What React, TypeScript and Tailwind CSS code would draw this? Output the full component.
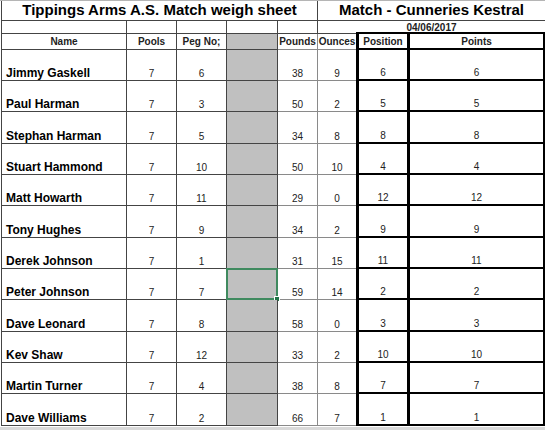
import React from 'react'

type Row = {
  name: string
  pools: number
  peg: number
  pounds: number
  ounces: number
  position: number
  points: number
}

const ROWS: Row[] = [
  { name: 'Jimmy Gaskell', pools: 7, peg: 6, pounds: 38, ounces: 9, position: 6, points: 6 },
  { name: 'Paul Harman', pools: 7, peg: 3, pounds: 50, ounces: 2, position: 5, points: 5 },
  { name: 'Stephan Harman', pools: 7, peg: 5, pounds: 34, ounces: 8, position: 8, points: 8 },
  { name: 'Stuart Hammond', pools: 7, peg: 10, pounds: 50, ounces: 10, position: 4, points: 4 },
  { name: 'Matt Howarth', pools: 7, peg: 11, pounds: 29, ounces: 0, position: 12, points: 12 },
  { name: 'Tony Hughes', pools: 7, peg: 9, pounds: 34, ounces: 2, position: 9, points: 9 },
  { name: 'Derek Johnson', pools: 7, peg: 1, pounds: 31, ounces: 15, position: 11, points: 11 },
  { name: 'Peter Johnson', pools: 7, peg: 7, pounds: 59, ounces: 14, position: 2, points: 2 },
  { name: 'Dave Leonard', pools: 7, peg: 8, pounds: 58, ounces: 0, position: 3, points: 3 },
  { name: 'Kev Shaw', pools: 7, peg: 12, pounds: 33, ounces: 2, position: 10, points: 10 },
  { name: 'Martin Turner', pools: 7, peg: 4, pounds: 38, ounces: 8, position: 7, points: 7 },
  { name: 'Dave Williams', pools: 7, peg: 2, pounds: 66, ounces: 7, position: 1, points: 1 },
]

const SELECTED = 'Peter Johnson'

// numbers sit at the bottom of the cell, centred, like Excel
const num = 'flex items-end justify-center pb-[1px] text-[10px] leading-[10px] text-[#222]'

function DataRow({ row, index }: { row: Row; index: number }) {
  const h = index % 3 === 2 ? 'h-[32px]' : 'h-[31px]'
  const selected = row.name === SELECTED

  return (
    <div className={`flex ${h}`}>
      <div className="w-[125px] flex items-end pl-[4px] pb-[1px] text-[12px] leading-[12px] font-bold text-black border-r border-b border-[#444]">
        {row.name}
      </div>
      <div className={`w-[50px] ${num} border-r border-b border-[#444]`}>{row.pools}</div>
      <div className={`w-[50px] ${num} border-r border-b border-[#444]`}>{row.peg}</div>
      <div className="w-[51px] bg-[#c0c0c0] border-r border-b border-[#444] relative">
        {selected && (
          <>
            <div className="absolute -left-px -top-px -right-px -bottom-px border-2 border-[#3f8a5f]" />
            <div className="absolute -right-[3px] -bottom-[3px] w-[6px] h-[6px] bg-[#217346] border border-white" />
          </>
        )}
      </div>
      <div className={`w-[40px] ${num} border-r border-b border-[#8a8a8a]`}>{row.pounds}</div>
      <div className={`w-[38px] ${num} border-b border-[#8a8a8a]`}>{row.ounces}</div>
      <div className={`w-[54px] ${num} border-l-[3px] border-r-[3px] border-b-2 border-black`}>{row.position}</div>
      <div className={`w-[135px] ${num} border-r-2 border-b-2 border-black`}>{row.points}</div>
    </div>
  )
}

export default function App() {
  return (
    <div
      className="w-[545px] h-[431px] bg-white overflow-hidden border-t border-[#b5b5b5]"
      style={{ fontFamily: '"Liberation Sans", Arial, sans-serif' }}
    >
      <div className="ml-px border-l border-[#444] w-[544px]">
        {/* Title row */}
        <div className="flex h-[20px]">
          <div className="w-[316px] flex items-center justify-center text-[15px] font-bold text-black border-r border-b border-[#444]">
            Tippings Arms A.S. Match weigh sheet
          </div>
          <div className="w-[227px] flex items-center justify-center text-[15px] font-bold text-black border-b border-[#444]">
            Match - Cunneries Kestral
          </div>
        </div>

        {/* Date row */}
        <div className="flex h-[13px]">
          <div className="w-[125px] border-r border-b border-[#444]" />
          <div className="w-[50px] border-r border-b border-[#444]" />
          <div className="w-[50px] border-r border-b border-[#444]" />
          <div className="w-[51px] border-r border-b border-[#444]" />
          <div className="w-[40px] border-r border-b border-[#444]" />
          <div className="w-[227px] flex items-center justify-center text-[10px] font-bold text-[#222] border-b border-[#444]">
            04/06/2017
          </div>
        </div>

        {/* Header row */}
        <div className="flex h-[16px] text-[10px] font-bold text-[#222]">
          <div className="w-[125px] flex items-center justify-center border-r border-b border-[#444]">Name</div>
          <div className="w-[50px] flex items-center justify-center border-r border-b border-[#444]">Pools</div>
          <div className="w-[50px] flex items-center justify-center border-r border-b border-[#444]">Peg No;</div>
          <div className="w-[51px] bg-[#c0c0c0] border-r border-b border-[#444]" />
          <div className="w-[40px] flex items-center justify-center border-r border-b border-[#8a8a8a]">Pounds</div>
          <div className="w-[38px] flex items-center justify-center border-b border-[#8a8a8a]">Ounces</div>
          <div className="w-[54px] flex items-center justify-center border-l-[3px] border-r-[3px] border-t-2 border-b-2 border-black -mt-[2px] h-[18px]">
            Position
          </div>
          <div className="w-[135px] flex items-center justify-center border-r-2 border-t-2 border-b-2 border-black -mt-[2px] h-[18px]">
            Points
          </div>
        </div>

        {ROWS.map((row, i) => (
          <DataRow key={row.name} row={row} index={i} />
        ))}
      </div>
      <div className="h-[3px] mt-[1px] bg-[#d9d9d9]" />
    </div>
  )
}
